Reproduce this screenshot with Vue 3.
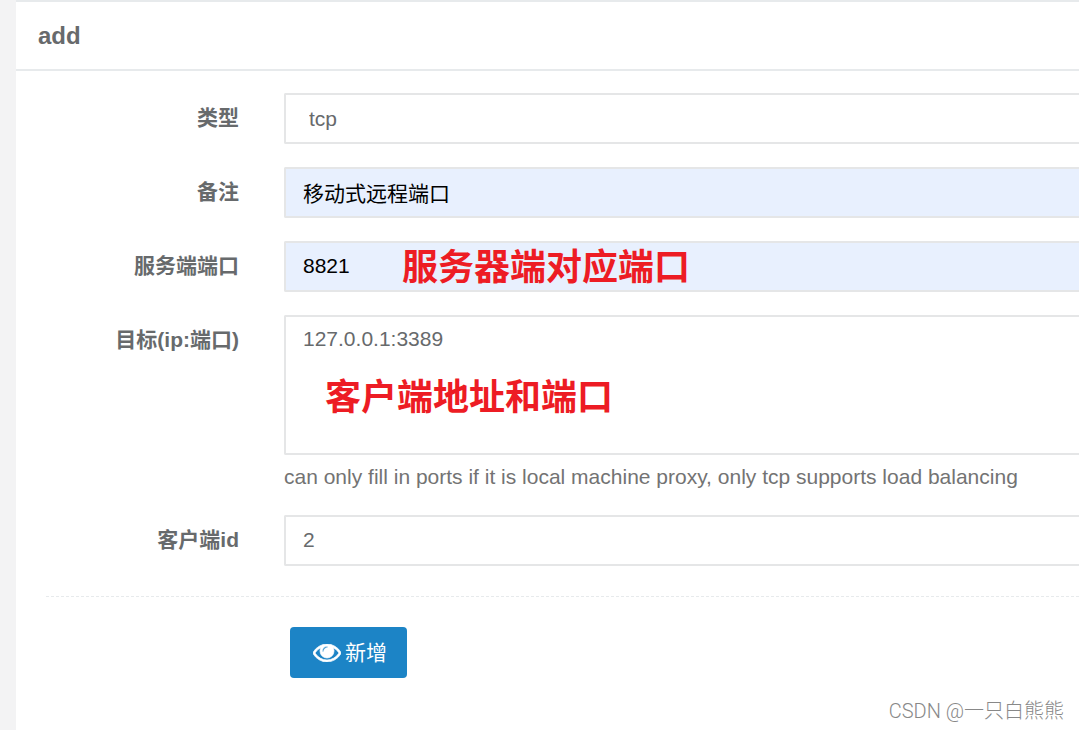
<script setup>
import { ref } from 'vue'

const type = ref('tcp')
const remark = ref('移动式远程端口')
const port = ref('8821')
const target = ref('127.0.0.1:3389')
const clientId = ref('2')
</script>

<template>
  <main class="page">
    <section class="panel">
      <header class="panel-head">
        <h1 class="title">add</h1>
      </header>
      <form class="form" @submit.prevent>
        <div class="row">
          <label class="label" for="type">类型</label>
          <select id="type" v-model="type" class="control select">
            <option value="tcp">tcp</option>
          </select>
        </div>
        <div class="row">
          <label class="label" for="remark">备注</label>
          <input id="remark" v-model="remark" class="control filled" type="text" />
        </div>
        <div class="row">
          <label class="label" for="port">服务端端口</label>
          <div class="field">
            <input id="port" v-model="port" class="control filled" type="text" />
            <span class="note note-port">服务器端对应端口</span>
          </div>
        </div>
        <div class="row">
          <label class="label" for="target">目标(ip:端口)</label>
          <div class="field">
            <textarea id="target" v-model="target" class="control area"></textarea>
            <span class="note note-target">客户端地址和端口</span>
            <p class="help">can only fill in ports if it is local machine proxy, only tcp supports load balancing</p>
          </div>
        </div>
        <div class="row">
          <label class="label" for="client">客户端id</label>
          <input id="client" v-model="clientId" class="control" type="text" />
        </div>
        <hr class="divider" />
        <div class="actions">
          <button class="submit" type="submit">
            <svg class="eye" viewBox="0 384 1792 1152" aria-hidden="true">
              <path
                fill="#fff"
                stroke="#fff"
                stroke-width="44"
                d="M1664 960q-152-236-381-353 61 104 61 225 0 185-131.500 316.500t-316.500 131.500-316.500-131.500-131.500-316.500q0-121 61-225-229 117-381 353 133 205 333.500 326.500t434.500 121.500 434.500-121.500 333.500-326.500zm-720-384q0-20-14-34t-34-14q-125 0-214.500 89.500t-89.500 214.500q0 20 14 34t34 14 34-14 14-34q0-86 61-147t147-61q20 0 34-14t14-34zm848 384q0 34-20 69-140 230-376.500 368.500t-499.500 138.500-499.500-139-376.500-368q-20-35-20-69t20-69q140-229 376.500-368t499.500-139 499.500 139 376.500 368q20 35 20 69z"
              />
            </svg>
            <span>新增</span>
          </button>
        </div>
      </form>
    </section>
    <div class="watermark">CSDN @一只白熊熊</div>
  </main>
</template>

<style>
body {
  margin: 0;
  background: #f3f3f4;
}
</style>

<style scoped>
.page {
  position: relative;
  box-sizing: border-box;
  min-height: 100vh;
  padding-left: 16px;
  display: flex;
  overflow: hidden;
  background: #f3f3f4;
  color: #676a6c;
  font-family: "Liberation Sans", "Noto Sans CJK SC", sans-serif;
  font-size: 21px;
  line-height: 30px;
}
.panel {
  flex: 1;
  min-width: 0;
  background: #fff;
  border-top: 2px solid #e7eaec;
}
.panel-head {
  padding: 19px 22px 18px;
  border-bottom: 2px solid #e7eaec;
}
.title {
  margin: 0;
  font-size: 24px;
  line-height: 30px;
  font-weight: 700;
}
.form {
  display: flex;
  flex-direction: column;
  gap: 23px;
  padding: 22px 0 50px 30px;
}
.row {
  display: grid;
  grid-template-columns: 193px minmax(0, 1fr);
  column-gap: 45px;
  align-items: start;
}
.label {
  padding-top: 10px;
  text-align: right;
  font-weight: 700;
}
.field {
  position: relative;
}
.control {
  display: block;
  box-sizing: border-box;
  width: 100%;
  height: 51px;
  margin: 0;
  padding: 7px 17px 9px;
  border: 2px solid #e5e6e7;
  border-right: 0;
  border-radius: 2px 0 0 2px;
  outline: 0;
  background: #fff;
  color: inherit;
  font: inherit;
  appearance: none;
}
.select {
  padding: 8px 23px;
}
.filled {
  background: #e8f0fe;
  color: #000;
}
.area {
  height: 140px;
  resize: none;
  overflow: hidden;
}
.help {
  margin: 7px 0 0;
  color: #737373;
}
.note {
  position: absolute;
  color: #ed1c24;
  font-size: 36px;
  line-height: 48px;
  font-weight: 700;
  white-space: nowrap;
  pointer-events: none;
}
.note-port {
  left: 118px;
  top: 3px;
}
.note-target {
  left: 41px;
  top: 59px;
}
.divider {
  width: 100%;
  margin: 7px 0;
  border: 0;
  border-top: 1px dashed #e7eaec;
}
.actions {
  padding-left: 244px;
}
.submit {
  display: flex;
  align-items: center;
  gap: 4px;
  height: 51px;
  margin: 0;
  padding: 0 20px 0 23px;
  border: 0;
  border-radius: 4px;
  background: #1c84c6;
  color: #fff;
  font: inherit;
}
.eye {
  width: 28px;
  height: 18px;
}
.watermark {
  position: absolute;
  right: 15px;
  bottom: 4px;
  color: #888;
  font-family: Roboto, "Noto Sans CJK SC", sans-serif;
  font-size: 20px;
  font-weight: 300;
}
</style>
